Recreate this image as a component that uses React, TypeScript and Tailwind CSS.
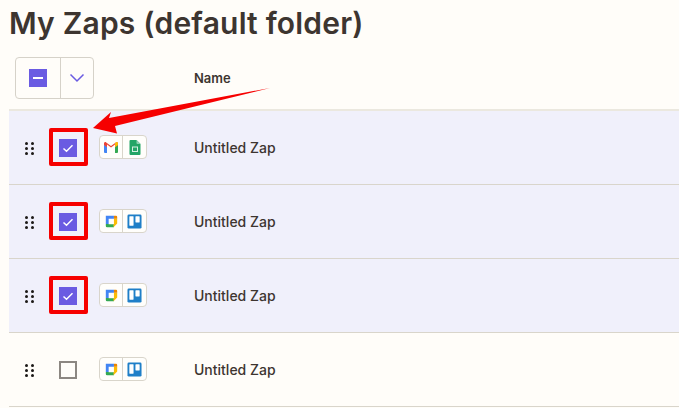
const GoogleChatLike = () => (
  <svg width="13" height="13" viewBox="0 0 16 16">
    <path d="M1 1H11V4.500H4.500V11H1Z" fill="#4285f4" />
    <path d="M1 11H4.500V11.500H11V15H2.500A1.500 1.500 0 0 1 1 13.500Z" fill="#34a853" />
    <path d="M11 4.500H15V10.500L10.500 15V11.500H11Z" fill="#fbbc04" />
    <path d="M11 1H13.500A1.500 1.500 0 0 1 15 2.500V4.500H11Z" fill="#ea8600" />
  </svg>
);

const Trello = () => (
  <svg width="15" height="15" viewBox="0 0 16 16">
    <rect x="0.500" y="0.500" width="15" height="15" rx="1.500" fill="#1f7fc8" />
    <rect x="2.500" y="2.500" width="4.500" height="10" rx="0.500" fill="#fff" />
    <rect x="9" y="2.500" width="4.500" height="6.500" rx="0.500" fill="#fff" />
  </svg>
);

const Gmail = () => (
  <svg width="14" height="11" viewBox="0 0 14 11">
    <path d="M0 2.500V10A1 1 0 0 0 1 11H3V5Z" fill="#4285f4" />
    <path d="M14 2.500V10A1 1 0 0 1 13 11H11V5Z" fill="#34a853" />
    <path d="M0 1.500C0 .4 1.300 -.3 2.200 .4L7 4 11.800 .4C12.700 -.3 14 .4 14 1.500V3L11 5.200V2.500L7 5.600 3 2.500V5.200L0 3Z" fill="#ea4335" />
    <path d="M11 2.500V5.200L14 3V1.500C14 .4 12.700 -.3 11.800 .4L11 1Z" fill="#fbbc04" />
  </svg>
);

const Sheets = () => (
  <svg width="12" height="15" viewBox="0 0 11 15">
    <path d="M1 0H7L11 4V14A1 1 0 0 1 10 15H1A1 1 0 0 1 0 14V1A1 1 0 0 1 1 0Z" fill="#23a566" />
    <path d="M7 0L11 4H8A1 1 0 0 1 7 3Z" fill="#8ed1b1" />
    <rect x="3" y="7" width="5" height="4.500" fill="none" stroke="#d5efe2" strokeWidth="1" />
  </svg>
);

const Grip = () => (
  <div className="grid grid-cols-2 gap-x-[3px] gap-y-[2px] w-[8px]">
    {Array.from({ length: 6 }).map((_, i) => (
      <span key={i} className="w-[3px] h-[3px] rounded-full bg-[#1c1917]" />
    ))}
  </div>
);

const Checkbox = ({ checked, outlined }: { checked: boolean; outlined: boolean }) => (
  <div className="relative w-[18px] h-[18px]">
    {checked ? (
      <div className="w-[18px] h-[18px] bg-[#6a5be2] flex items-center justify-center">
        <svg width="12" height="12" viewBox="0 0 12 12" fill="none">
          <path d="M1.500 6.500L4.500 9.200L10.500 3.200" stroke="#fff" strokeWidth="1.500" />
        </svg>
      </div>
    ) : (
      <div className="w-[18px] h-[18px] border-2 border-[#8c8782] bg-[#fffdf9]" />
    )}
    {outlined && (
      <div className="absolute left-[-10px] top-[-11px] w-[39px] h-[38px] border-[4px] border-[#f60000] rounded-[2px]" />
    )}
  </div>
);

const rows = [
  { apps: 'gmail', checked: true },
  { apps: 'chat', checked: true },
  { apps: 'chat', checked: true },
  { apps: 'chat', checked: false },
];

export default function App() {
  return (
    <div className="relative w-[679px] h-[408px] overflow-hidden bg-[#fffdf9] font-['Inter',sans-serif]">
      <h1 className="pl-[9px] pt-[3px] h-[57px] text-[30px] leading-[40px] font-semibold tracking-[0.2px] text-[#3d3530] whitespace-nowrap">
        My Zaps (default folder)
      </h1>

      <div className="ml-[9px]">
        <div className="flex h-[54px] border-b-[2px] border-[#ebe8df]">
          <div className="ml-[6px] flex w-[79px] h-[42px] border border-[#d6d2c9] rounded-[4px]">
            <div className="w-[45px] flex items-center justify-center border-r border-[#d6d2c9]">
              <div className="w-[18px] h-[18px] bg-[#6a5be2] flex items-center justify-center">
                <div className="w-[10px] h-[2px] bg-white" />
              </div>
            </div>
            <div className="flex-1 flex items-center justify-center">
              <svg width="16" height="10" viewBox="0 0 16 10" fill="none">
                <path d="M1.500 1.500L8 8L14.500 1.500" stroke="#6a5be2" strokeWidth="1.500" />
              </svg>
            </div>
          </div>
          <div className="ml-[100px] mt-[12px] text-[13px] leading-[18px] font-semibold text-[#3d3530]">Name</div>
        </div>

        {rows.map((row, i) => (
          <div
            key={i}
            className={`flex items-center h-[74px] pt-[1px] border-b border-[#d9d5cb] ${row.checked ? 'bg-[#f0f0fb]' : ''}`}
          >
            <div className="ml-[16px] w-[8px]"><Grip /></div>
            <div className="ml-[26px]"><Checkbox checked={row.checked} outlined={row.checked} /></div>
            <div className="ml-[22px] mb-[2px] flex w-[48px] h-[24px] border border-[#d9d5cb] rounded-[4px] bg-[#fffefb]">
              <div className="w-[23px] flex items-center justify-center border-r border-[#d9d5cb]">
                {row.apps === 'gmail' ? <Gmail /> : <GoogleChatLike />}
              </div>
              <div className="flex-1 flex items-center justify-center">
                {row.apps === 'gmail' ? <Sheets /> : <Trello />}
              </div>
            </div>
            <div className="ml-[47px] text-[14px] leading-[20px] font-medium text-[#3d3530]">Untitled Zap</div>
          </div>
        ))}
      </div>

      <svg className="absolute left-0 top-0" width="679" height="408" viewBox="0 0 679 408">
        <path d="M270 88L109 118L111 112L93 128L117 133.500L115 126Z" fill="#f60000" />
      </svg>
    </div>
  );
}
